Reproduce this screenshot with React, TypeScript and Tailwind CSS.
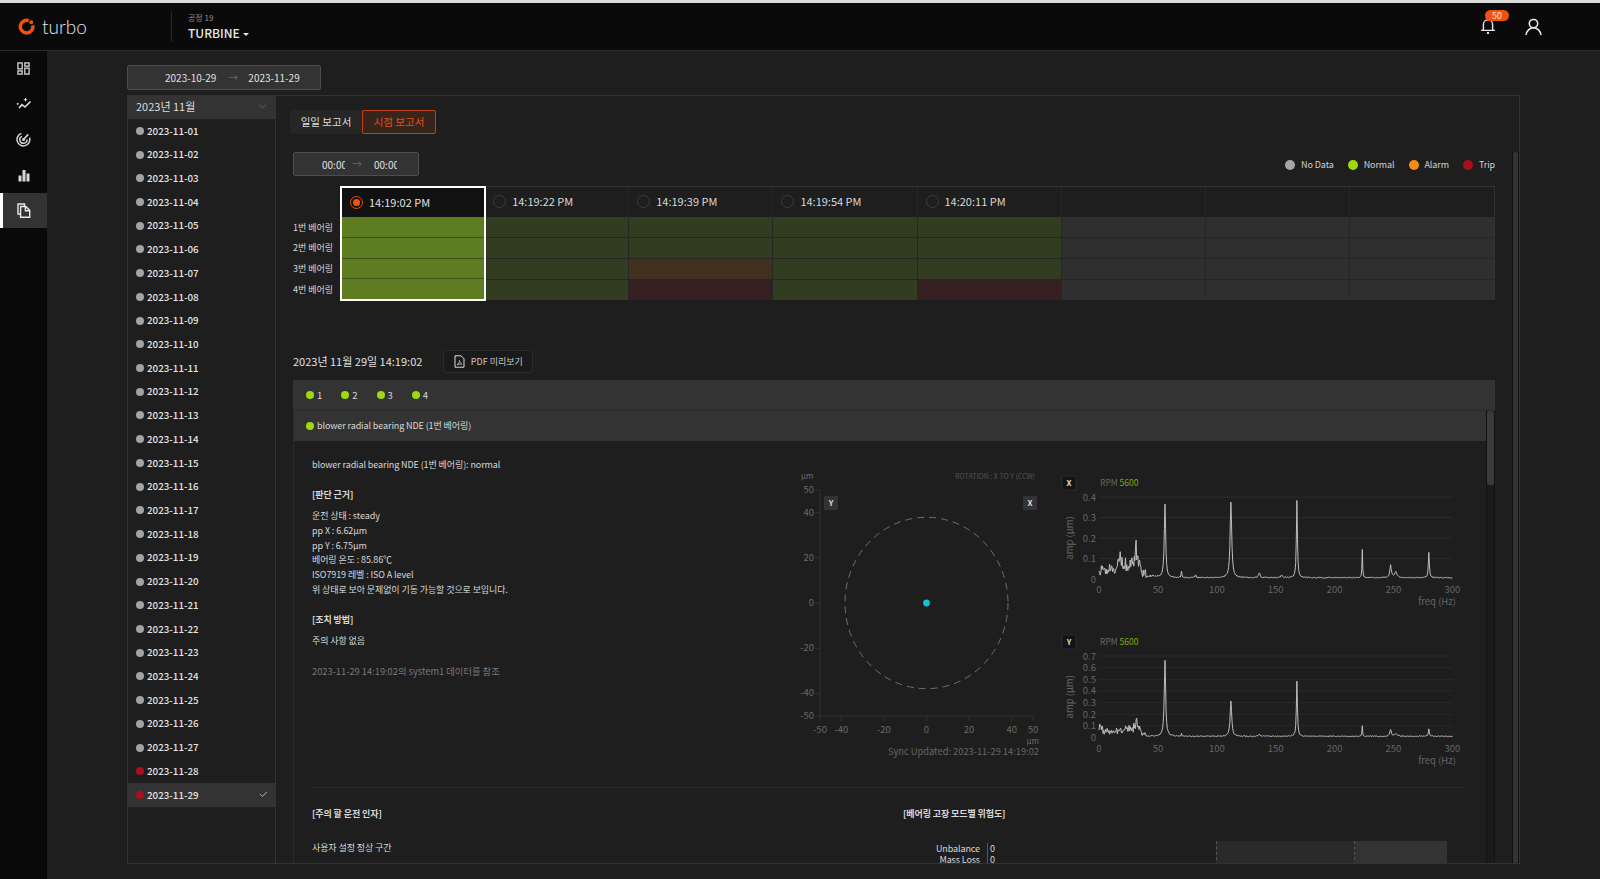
import type { ReactNode } from 'react'
import { Check, ChevronDown } from 'lucide-react'

const dates = Array.from({ length: 29 }, (_, i) => `2023-11-${String(i + 1).padStart(2, '0')}`)
const times = ['14:19:02 PM', '14:19:22 PM', '14:19:39 PM', '14:19:54 PM', '14:20:11 PM']

const GREEN = 'bg-[#323c20]'
const ALARM = 'bg-[#42301f]'
const TRIP = 'bg-[#361f20]'
const EMPTY = 'bg-[#2f2f2f]'

const columns = [
  [GREEN, GREEN, GREEN, GREEN],
  [GREEN, GREEN, ALARM, TRIP],
  [GREEN, GREEN, GREEN, GREEN],
  [GREEN, GREEN, GREEN, TRIP],
  [EMPTY, EMPTY, EMPTY, EMPTY],
  [EMPTY, EMPTY, EMPTY, EMPTY],
  [EMPTY, EMPTY, EMPTY, EMPTY],
]

const Logo = () => (
  <svg width="17" height="17" viewBox="0 0 17 17" fill="none">
    <path d="M10.800 2.700A6.300 6.300 0 1 0 14.800 7.400" stroke="#f4500f" strokeWidth="3.500" />
    <circle cx="13.200" cy="4.200" r="2" fill="#f4500f" />
  </svg>
)

const NavIcon = ({ kind }: { kind: string }) => {
  if (kind === 'dash') {
    return (
      <svg width="13" height="13" viewBox="0 0 14 14" fill="none" stroke="#d8d8d8" strokeWidth="1.400">
        <rect x="1" y="1" width="4.600" height="6.400" />
        <rect x="8.400" y="1" width="4.600" height="3.400" />
        <rect x="1" y="9.600" width="4.600" height="3.400" />
        <rect x="8.400" y="6.600" width="4.600" height="6.400" />
      </svg>
    )
  }
  if (kind === 'trend') {
    return (
      <svg width="16" height="14" viewBox="0 0 16 14" fill="none" stroke="#e0e0e0" strokeWidth="1.600">
        <path d="M3 11l3-3.400 3 2.400 5.500-5.500" />
        <path d="M9.500 1v3.400M7.800 2.700h3.400" strokeWidth="1" />
        <path d="M1 7.400l1.400-1" />
      </svg>
    )
  }
  if (kind === 'radar') {
    return (
      <svg width="15" height="15" viewBox="0 0 15 15" fill="none" stroke="#d8d8d8">
        <path d="M5.400 1.400a6.400 6.400 0 1 0 8.200 4.400" strokeWidth="1.500" />
        <path d="M6 4.400a3.600 3.600 0 1 0 5 3" strokeWidth="1.500" />
        <circle cx="7.500" cy="7.500" r="1.500" fill="#d8d8d8" stroke="none" />
        <path d="M7.500 7.500L12.200 2.400" strokeWidth="1.600" />
      </svg>
    )
  }
  if (kind === 'bars') {
    return (
      <svg width="12" height="13" viewBox="0 0 12 13" fill="#d8d8d8">
        <rect x="0.500" y="6.500" width="3" height="6" />
        <rect x="4.500" y="1" width="3" height="11.500" />
        <rect x="8.500" y="4.500" width="3" height="8" />
      </svg>
    )
  }
  return (
    <svg width="14" height="15" viewBox="0 0 14 15" fill="none" stroke="#e8e8e8" strokeWidth="1.400">
      <path d="M3 11H1V1h6.500v2" />
      <path d="M3.600 3.500h5.200l3.900 3.900v6.900H3.600z" />
      <path d="M8.400 3.500v4.200h4.300" />
    </svg>
  )
}

const Dot = ({ color }: { color: string }) => <span className={`block size-[8px] shrink-0 rounded-full ${color}`} />

const Header = () => (
  <header className="flex h-[48px] shrink-0 items-center border-b border-[#2c2c2c] bg-[#0a0a0a]">
    <div className="flex w-[171px] items-center pl-[18px]">
      <Logo />
      <span className="ml-[7px] font-['Lato'] text-[19px] font-light leading-none text-[#e6e6e6]">turbo</span>
    </div>
    <div className="h-[31px] w-px bg-[#262626]" />
    <div className="ml-[16px] flex flex-col">
      <span className="text-[8px] leading-[12px] text-[#8d8d8d]">공정 19</span>
      <span className="mt-[1px] flex items-center text-[12px] font-medium leading-[16px] text-[#e8e8e8]">
        TURBINE
        <span className="ml-[3px] mt-[2px] border-x-[3px] border-t-[3px] border-x-transparent border-t-[#e8e8e8]" />
      </span>
    </div>
    <div className="ml-auto flex items-center pr-[58px]">
      <div className="relative mr-[29px] mt-[-2px]">
        <svg width="16" height="18" viewBox="0 0 16 18" fill="none" stroke="#e6e6e6" strokeWidth="1.400">
          <path d="M3.400 13.200V7.400a4.600 4.600 0 0 1 9.200 0v5.800M1 13.400h14" />
          <path d="M7 16h2" strokeWidth="2" />
        </svg>
        <span className="absolute left-[5px] top-[-7px] flex h-[11px] w-[24px] items-center justify-center rounded-full bg-[#f4500f] text-[9px] leading-none text-[#ffe9dc]">
          50
        </span>
      </div>
      <svg width="17" height="18" viewBox="0 0 17 18" fill="none" stroke="#ededed" strokeWidth="1.500">
        <circle cx="8.500" cy="5.600" r="4.200" />
        <path d="M1 17c.6-4 3.600-7.200 7.500-7.200S15.400 13 16 17" />
      </svg>
    </div>
  </header>
)

const Sidebar = () => (
  <nav className="flex w-[47px] shrink-0 flex-col bg-[#090909]">
    {['dash', 'trend', 'radar', 'bars'].map((kind) => (
      <div key={kind} className="flex h-[35.500px] items-center justify-center">
        <NavIcon kind={kind} />
      </div>
    ))}
    <div className="flex h-[35px] items-center justify-center border-l-[3px] border-white bg-[#333333] pr-[3px]">
      <NavIcon kind="doc" />
    </div>
  </nav>
)

const RangeBox = ({ from, to, className, textClass }: { from: string; to: string; className: string; textClass: string }) => (
  <div className={`flex items-center rounded-[2px] border border-[#4d4d4d] bg-[#333333] text-[#e0e0e0] ${className}`}>
    <span className={textClass}>{from}</span>
    <span className="text-[10px] leading-none text-[#666]">→</span>
    <span className={textClass}>{to}</span>
  </div>
)

const DateList = () => (
  <aside className="w-[148px] shrink-0 border-r border-[#333]">
    <div className="flex h-[23px] items-center justify-between bg-[#333333] pb-[2px] pl-[8px] pr-[6px] text-[11px] text-[#dcdcdc]">
      2023년 11월
      <ChevronDown size={13} strokeWidth={1} color="#888" />
    </div>
    <ul>
      {dates.map((d) => {
        const trip = d.endsWith('28') || d.endsWith('29')
        const selected = d.endsWith('29')
        return (
          <li key={d} className={`flex h-[23.720px] items-center pl-[8px] pr-[8px] text-[9.800px] font-medium text-[#e4e4e4] ${selected ? 'bg-[#333333]' : ''}`}>
            <Dot color={trip ? 'bg-[#a90f1c]' : 'bg-[#a3a3a3]'} />
            <span className="ml-[3px]">{d}</span>
            {selected && <Check size={9} strokeWidth={2} color="#ddd" className="ml-auto mr-[-1px]" />}
          </li>
        )
      })}
    </ul>
  </aside>
)

const Legend = () => (
  <div className="flex items-center gap-[14px] text-[9px] tracking-[-0.1px] text-[#d2d2d2]">
    {[
      ['No Data', 'bg-[#a6a6a6]'],
      ['Normal', 'bg-[#9ed80e]'],
      ['Alarm', 'bg-[#f98c12]'],
      ['Trip', 'bg-[#a90f1c]'],
    ].map(([label, color]) => (
      <span key={label} className="flex items-center gap-[6px]">
        <span className={`block size-[10px] rounded-full ${color}`} />
        {label}
      </span>
    ))}
  </div>
)

const TimeTable = () => (
  <div className="flex">
    <div className="flex w-[47px] shrink-0 flex-col pt-[31px]">
      {[1, 2, 3, 4].map((n) => (
        <div key={n} className="flex h-[20.700px] items-center text-[9px] text-[#d8d8d8]">
          {n}번 베어링
        </div>
      ))}
    </div>
    <div className="relative grid h-[113px] flex-1 grid-cols-8 border border-[#333]">
      <div className="relative z-10 -m-px flex h-[115px] flex-col border-2 border-white bg-[#111]">
        <div className="flex h-[29px] items-center gap-[6px] pb-[1px] pl-[8px] text-[11px] text-[#e0e0e0]">
          <span className="flex size-[13px] items-center justify-center rounded-full border border-[#e0500f]">
            <span className="size-[7px] rounded-full bg-[#f4500f]" />
          </span>
          {times[0]}
        </div>
        {[0, 1, 2, 3].map((n) => (
          <div key={n} className="flex-1 border-b border-[#3f4f1e] bg-[#5e7d21] last:border-0" />
        ))}
      </div>
      {columns.map((cells, i) => (
        <div key={i} className="flex flex-col border-r border-[#262626] last:border-0">
          <div className="flex h-[30px] items-center gap-[6px] bg-[#1e1e1e] pb-[1px] pl-[8px] text-[11px] text-[#d8d8d8]">
            {times[i + 1] && (
              <>
                <span className="size-[13px] rounded-full border border-[#3d3d3d]" />
                {times[i + 1]}
              </>
            )}
          </div>
          {cells.map((c, n) => (
            <div key={n} className={`flex-1 border-b border-[#262626] last:border-0 ${c}`} />
          ))}
        </div>
      ))}
    </div>
  </div>
)

const OrbitChart = () => {
  const ticks = [-50, -40, -20, 0, 20, 40, 50]
  const x = (v: number) => 35 + ((v + 50) / 100) * 213
  const y = (v: number) => 25 + ((50 - v) / 100) * 226
  return (
    <svg width="260" height="285" viewBox="0 0 260 285" className="font-['Noto_Sans_CJK_KR']">
      <path d="M35 25V251H248" stroke="#303030" fill="none" />
      {ticks.map((t) => (
        <g key={t} fill="#6a6a6a" fontSize="9.500">
          <path d={`M30 ${y(t)}h5M${x(t)} 251v5`} stroke="#303030" />
          <text x="29" y={y(t) + 3} textAnchor="end">{t}</text>
          <text x={x(t)} y="268" textAnchor="middle">{t}</text>
        </g>
      ))}
      <text x="16" y="14" fill="#6a6a6a" fontSize="8">µm</text>
      <text x="250" y="14" fill="#555" fontSize="7" textAnchor="end">ROTATION : X TO Y (CCW)</text>
      <text x="254" y="279" fill="#6a6a6a" fontSize="8" textAnchor="end">µm</text>
      <rect x="39" y="31" width="14" height="14" fill="#333" />
      <text x="46" y="41" fill="#ddd" fontSize="8" fontWeight="700" textAnchor="middle">Y</text>
      <rect x="238" y="31" width="14" height="14" fill="#333" />
      <text x="245" y="41" fill="#ddd" fontSize="8" fontWeight="700" textAnchor="middle">X</text>
      <ellipse cx={x(0)} cy={y(0)} rx="81.500" ry="85.700" fill="none" stroke="#6e6e6e" strokeDasharray="7 5" />
      <circle cx={x(0)} cy={y(0)} r="3.400" fill="#0cc4d6" />
    </svg>
  )
}

type Peak = [number, number, number]

// small seeded generator so the noise stays the same between renders
const makeSpectrum = (peaks: Peak[], low: Peak[], scale: number, seed: number) => {
  let s = seed
  const rnd = () => {
    s = (s * 9301 + 49297) % 233280
    return s / 233280
  }
  const values: number[] = []
  for (let f = 0; f <= 300; f += 0.5) {
    let v = 0.004 * scale + rnd() * 0.005 * scale
    for (const [c, a, w] of peaks) v += a / (1 + ((f - c) / w) ** 2)
    for (const [c, a, w] of low) v += a * Math.exp(-(((f - c) / w) ** 2)) * (0.25 + rnd() * 0.75)
    if (f < 40) v += rnd() * 0.035 * (scale > 1 ? 1 : scale)
    values.push(v)
  }
  return values
}

const SpectrumChart = ({ axis, max, step, peaks, low, seed }: { axis: string; max: number; step: number; peaks: Peak[]; low: Peak[]; seed: number }) => {
  const top = 28
  const bottom = top + (axis === 'X' ? 82 : 81.600)
  const left = 41
  const width = 353.400
  const values = makeSpectrum(peaks, low, max / 0.4, seed)
  const py = (v: number) => bottom - (v / max) * (bottom - top)
  const line = values.map((v, i) => `${i ? 'L' : 'M'}${(left + (i / 600) * width).toFixed(1)} ${py(v).toFixed(1)}`).join('')
  const yTicks = Array.from({ length: Math.round(max / step) + 1 }, (_, i) => i * step)
  return (
    <svg width="410" height="144" viewBox="0 0 410 144" className="font-['Noto_Sans_CJK_KR']">
      <rect x="4" y="7" width="14" height="14" fill="#141414" stroke="#2a2a2a" />
      <text x="11" y="17" fill="#ddd" fontSize="8" fontWeight="700" textAnchor="middle">{axis}</text>
      <text x={left + 1} y="17" fill="#666" fontSize="8.500">RPM <tspan fill="#7fa814">5600</tspan></text>
      {yTicks.map((t) => (
        <g key={t}>
          {t > 0 && <path d={`M${left} ${py(t)}h${width}`} stroke="#2a2a2a" />}
          <text x={left - 3} y={py(t) + 3.500} fill="#666" fontSize="9.500" textAnchor="end">{t === 0 ? '0' : t.toFixed(1)}</text>
        </g>
      ))}
      {[0, 50, 100, 150, 200, 250, 300].map((t) => (
        <text key={t} x={left + (t / 300) * width} y={bottom + 14} fill="#666" fontSize="9.500" textAnchor="middle">{t}</text>
      ))}
      <text x={398} y={bottom + 26} fill="#666" fontSize="9.500" textAnchor="end">freq (Hz)</text>
      <text transform={`translate(15 ${(top + bottom) / 2}) rotate(-90)`} fill="#666" fontSize="9.500" textAnchor="middle">amp (µm)</text>
      <path d={line} fill="none" stroke="#bebebe" strokeWidth="1" />
    </svg>
  )
}

const Line = ({ children, className = '', leading = 'leading-[14.700px]' }: { children: ReactNode; className?: string; leading?: string }) => (
  <p className={`text-[9px] tracking-[-0.1px] text-[#d8d8d8] ${leading} ${className}`}>{children}</p>
)

const ReportBody = () => (
  <div className="flex-1 overflow-hidden pl-[18px] pr-[20px]">
    <div className="flex h-[346px]">
      <div className="w-[473px] shrink-0 pt-[17px]">
        <Line>blower radial bearing NDE (1번 베어링): normal</Line>
        <Line className="mt-[16px] font-bold">[판단 근거]</Line>
        <div className="mt-[6px]">
          <Line>운전 상태 : steady</Line>
          <Line>pp X : 6.62µm</Line>
          <Line>pp Y : 6.75µm</Line>
          <Line>베어링 온도 : 85.86℃</Line>
          <Line>ISO7919 레벨 : ISO A level</Line>
          <Line>위 상태로 보아 문제없이 기동 가능할 것으로 보입니다.</Line>
        </div>
        <Line className="mt-[16px] font-bold">[조치 방법]</Line>
        <Line className="mt-[6px]">주의 사항 없음</Line>
        <p className="mt-[15px] text-[9.300px] leading-[14.700px] text-[#777]">2023-11-29 14:19:02의 system1 데이터를 참조</p>
      </div>
      <div className="w-[273px] shrink-0 pt-[24px]">
        <OrbitChart />
        <p className="mr-[19px] mt-[-5px] text-right text-[9.300px] leading-[12px] text-[#666]">Sync Updated: 2023-11-29 14:19:02</p>
      </div>
      <div className="flex flex-col pt-[28px]">
        <div className="h-[159px]">
          <SpectrumChart
            axis="X"
            max={0.4}
            step={0.1}
            seed={17}
            peaks={[[56, 0.36, 0.7], [70, 0.03, 0.4], [82, 0.015, 0.4], [112, 0.37, 0.8], [136, 0.025, 0.7], [155, 0.012, 0.8], [168, 0.375, 0.5], [223.5, 0.14, 0.3], [247.5, 0.06, 0.8], [252, 0.03, 1], [280, 0.125, 0.5]]}
            low={[[6, 0.05, 6], [18, 0.11, 3], [25, 0.08, 5], [32, 0.16, 3], [45, 0.015, 5]]}
          />
        </div>
        <SpectrumChart
          axis="Y"
          max={0.7}
          step={0.1}
          seed={131}
          peaks={[[56, 0.65, 0.7], [70, 0.02, 0.3], [112, 0.3, 0.8], [136, 0.015, 1], [168, 0.47, 0.5], [223.5, 0.09, 0.3], [247.5, 0.06, 0.8], [252, 0.025, 1], [280, 0.065, 0.5]]}
          low={[[1, 0.09, 2], [10, 0.04, 10], [25, 0.07, 7], [32, 0.12, 3]]}
        />
      </div>
    </div>
    <div className="h-px bg-[#2a2a2a]" />
    <div className="mt-[19px] flex">
      <div className="w-[591px] shrink-0">
        <Line className="font-bold">[주의 할 운전 인자]</Line>
        <Line className="mt-[20px]">사용자 설정 정상 구간</Line>
      </div>
      <div className="flex-1">
        <Line className="font-bold">[베어링 고장 모드별 위험도]</Line>
        <div className="mt-[20px] flex">
          <div className="mt-[2px] w-[85px] border-r border-[#555] pr-[7px] text-right">
            <Line leading="leading-[11px]">Unbalance</Line>
            <Line leading="leading-[11px]">Mass Loss</Line>
          </div>
          <div className="mt-[2px] pl-[2px]">
            <Line leading="leading-[11px]">0</Line>
            <Line leading="leading-[11px]">0</Line>
          </div>
          <div className="ml-[221px] flex h-[30px] w-[231px]">
            <div className="w-[139px] border-x border-dashed border-[#555] bg-[#2a2a2a]" />
            <div className="flex-1 bg-[#333333]" />
          </div>
        </div>
      </div>
    </div>
  </div>
)

const ReportPanel = () => (
  <section className="flex min-w-0 flex-1 flex-col overflow-hidden">
    <div className="ml-[14px] mt-[14px] flex h-[24px] w-fit items-stretch rounded-[2px] bg-[#262626] text-[10.500px]">
      <span className="flex w-[72px] items-center justify-center text-[#dedede]">일일 보고서</span>
      <span className="flex w-[74px] items-center justify-center rounded-[2px] border border-[#c2410c] bg-[#38241b] text-[#e2501a]">시점 보고서</span>
    </div>
    <div className="flex min-h-0 flex-1 pt-[18px]">
      <div className="flex min-w-0 flex-1 flex-col pl-[17px] pr-[17px]">
        <div className="flex h-[24px] shrink-0 items-center justify-between">
          <RangeBox from="00:00" to="00:00" className="h-[24px] w-[126px]" textClass="w-[23px] overflow-hidden text-[10px] first:ml-[28px] first:mr-[7px] last:ml-[12px]" />
          <div className="mt-[1px]">
            <Legend />
          </div>
        </div>
        <div className="mt-[10px] shrink-0">
          <TimeTable />
        </div>
        <div className="mt-[50px] flex h-[23px] shrink-0 items-center">
          <span className="text-[11px] text-[#e0e0e0]">2023년 11월 29일 14:19:02</span>
          <span className="ml-[21px] flex h-[23px] w-[90px] items-center justify-center gap-[6px] rounded-[2px] border border-[#2c2c2c] bg-[#1a1a1a] text-[9px] text-[#c8c8c8]">
            <svg width="11" height="13" viewBox="0 0 11 13" fill="none" stroke="#dedede">
              <path d="M1 .8h6l3 3v8.400H1z" />
              <path d="M3 9.800c1.500-.8 2.500-2.500 2.500-4.300.3 1.500 1 2.800 2.500 3.600-1.800-.2-3.400 0-5 .7z" strokeWidth="0.700" />
            </svg>
            PDF 미리보기
          </span>
        </div>
        <div className="mt-[7px] flex min-h-0 flex-1 flex-col">
          <div className="flex h-[31px] shrink-0 items-center gap-[19px] border-b border-[#2a2a2a] bg-[#333333] pl-[13px] text-[9.500px] text-[#d8d8d8]">
            {[1, 2, 3, 4].map((n) => (
              <span key={n} className="flex items-center gap-[3px]">
                <Dot color="bg-[#9ed80e]" />
                {n}
              </span>
            ))}
          </div>
          <div className="flex min-h-0 flex-1">
            <div className="flex min-w-0 flex-1 flex-col border-l border-[#2a2a2a]">
              <div className="flex h-[30px] shrink-0 items-center gap-[3px] bg-[#333333] pl-[12px] text-[9px] tracking-[-0.1px] text-[#d8d8d8]">
                <Dot color="bg-[#9ed80e]" />
                blower radial bearing NDE (1번 베어링)
              </div>
              <ReportBody />
            </div>
            <div className="w-[9px] shrink-0 border-x border-[#111] bg-[#1a1a1a]">
              <div className="h-[74px] rounded-[2px] bg-[#3a3a3a]" />
            </div>
          </div>
        </div>
      </div>
      <div className="w-[7px] shrink-0 border-x border-[#111] bg-[#1a1a1a]">
        <div className="h-full rounded-[2px] bg-[#333]" />
      </div>
    </div>
  </section>
)

export default function App() {
  return (
    <div className="flex h-[879px] w-[1600px] flex-col overflow-hidden border-t-[3px] border-[#dcdcdc] bg-[#1e1e1e] font-['Noto_Sans_CJK_KR',sans-serif]">
      <Header />
      <div className="flex min-h-0 flex-1">
        <Sidebar />
        <main className="flex min-w-0 flex-1 flex-col pb-[15px] pl-[80px] pr-[80px] pt-[14px]">
          <RangeBox
            from="2023-10-29"
            to="2023-11-29"
            className="h-[25px] w-[194px] shrink-0"
            textClass="text-[10px] first:ml-[37px] first:mr-[12px] last:ml-[10px]"
          />
          <div className="mt-[5px] flex min-h-0 flex-1 border border-[#333]">
            <DateList />
            <ReportPanel />
          </div>
        </main>
      </div>
    </div>
  )
}
